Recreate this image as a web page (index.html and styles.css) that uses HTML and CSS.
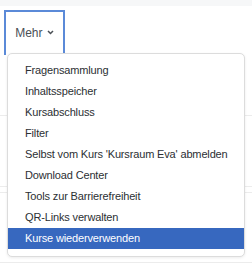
FILE: index.html
```html
<!DOCTYPE html>
<html lang="de">
<head>
    <meta charset="UTF-8">
    <title>Mehr</title>
    <link rel="stylesheet" href="styles.css">
</head>
<body>
    <div class="topstrip"></div>
    <div class="nav">
        <button class="more-tab">Mehr <svg class="caret" width="7" height="5" viewBox="0 0 7 5"><path d="M1 1 L3.5 3.5 L6 1" fill="none" stroke="#4a4f55" stroke-width="1.5"/></svg></button>
        <ul class="dropdown">
            <li>Fragensammlung</li>
            <li>Inhaltsspeicher</li>
            <li>Kursabschluss</li>
            <li>Filter</li>
            <li>Selbst vom Kurs 'Kursraum Eva' abmelden</li>
            <li>Download Center</li>
            <li>Tools zur Barrierefreiheit</li>
            <li>QR-Links verwalten</li>
            <li class="active">Kurse wiederverwenden</li>
        </ul>
    </div>
    <div class="content">
        <div class="line first"></div>
        <div class="line second"></div>
        <div class="line third"></div>
        <div class="line last"></div>
    </div>
</body>
</html>
```

FILE: styles.css
```css
body {
    margin: 0;
    background-color: #fff;
    font-family: "Liberation Sans", Arial, sans-serif;
    color: #1d2125;
}
.topstrip {
    height: 6px;
    background-color: #f6f7f8;
}
.nav {
    position: relative;
    padding: 4px 0 0 4px;
    height: 43px;
}
.more-tab {
    box-sizing: border-box;
    width: 61px;
    height: 45px;
    border: 2px solid #5b8ad8;
    border-bottom: none;
    background: #fff;
    font-family: inherit;
    font-size: 12px;
    color: #4a4f55;
    padding: 0 0 2px 0;
    text-align: center;
    cursor: pointer;
}
.caret {
    margin-left: 1px;
    vertical-align: 2px;
}
.dropdown {
    position: absolute;
    top: 47px;
    left: 7px;
    width: 236px;
    margin: 0;
    padding: 6px 0 7px;
    list-style: none;
    background: #fff;
    border: 1px solid #dcdcdc;
    border-radius: 5px;
    box-shadow: 0 1px 3px rgba(0, 0, 0, 0.08);
    z-index: 2;
}
.dropdown li {
    height: 21px;
    line-height: 21px;
    padding-left: 17px;
    font-size: 11px;
    letter-spacing: -0.15px;
    color: #2b2f33;
    white-space: nowrap;
}
.dropdown li.active {
    background-color: #3768bf;
    color: #fff;
}
.content {
    position: relative;
}
.line {
    height: 1px;
    background-color: #ececec;
}
.first {
    margin-top: 62px;
}
.second {
    margin-top: 70px;
}
.third {
    margin-top: 5px;
}
.last {
    margin-top: 69px;
}
```
